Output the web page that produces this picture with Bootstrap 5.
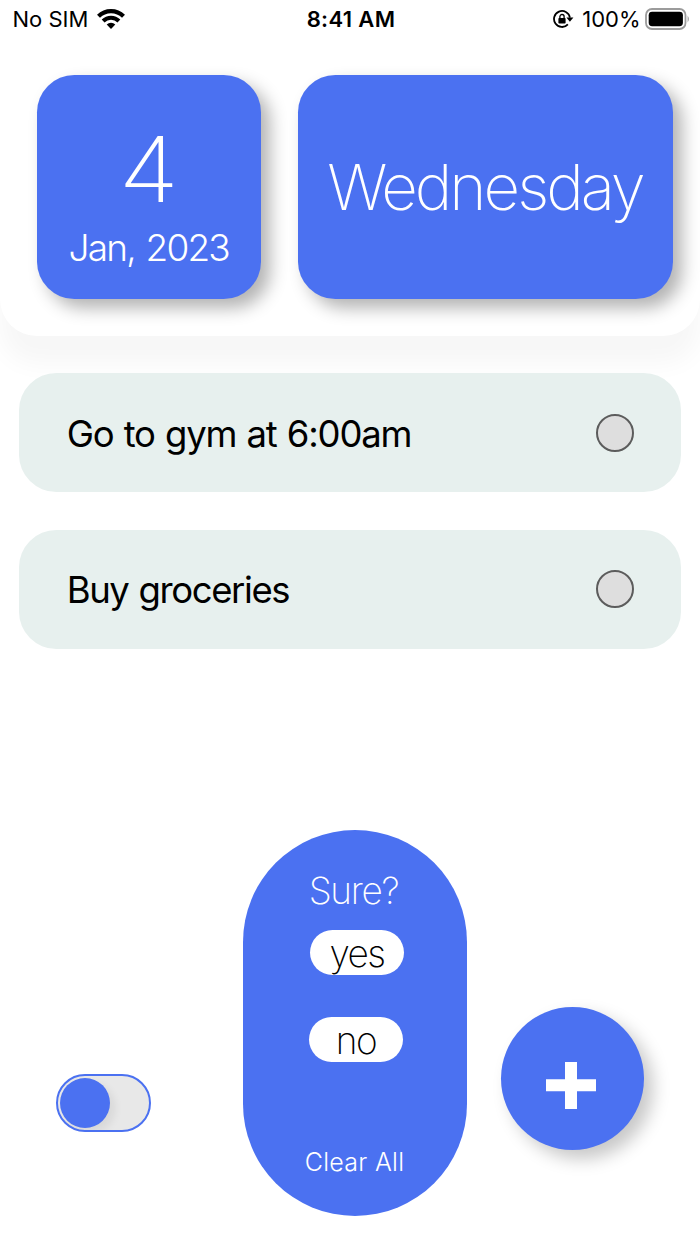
<!DOCTYPE html>
<html lang="en">
<head>
<meta charset="utf-8">
<meta name="viewport" content="width=device-width, initial-scale=1">
<title>Daily tasks</title>
<link href="https://cdn.jsdelivr.net/npm/bootstrap@5.3.0/dist/css/bootstrap.min.css" rel="stylesheet">
<style>
  :root { --blue: #4b71f1; }
  body { font-family: Inter, "Liberation Sans", sans-serif; color: #000; width: 700px; height: 1244px; overflow: hidden; background: #fff; }
  .txt { white-space: nowrap; display: block; }

  .status-bar { height: 37.5px; padding: 0 10.5px 0 12.5px; font-size: 22px; line-height: 38px; }
  .status-side { flex: 1 1 0; }
  .status-time { font-weight: 600; letter-spacing: .35px; }

  .top-panel { height: 335.5px; border-radius: 0 0 37px 37px; box-shadow: 0 28px 24px 0 #f7f7f7; background: #fff; }
  .tiles { padding: 37px 26.5px 0 37.3px; gap: 37.2px; }
  .tile { height: 224px; border-radius: 37.3px; background: var(--blue); box-shadow: 9px 9px 17px rgba(0,0,0,.3); color: #fff; }
  .tile-date { width: 224px; padding-top: 46px; }
  .tile-day { width: 375px; }
  .num { font-size: 91px; font-weight: 200; line-height: 96px; transform: scaleX(1.08); }
  .month { font-size: 37px; font-weight: 300; line-height: 61px; letter-spacing: -1.8px; word-spacing: 2px; margin-left: -1px; }
  .weekday { font-size: 63.5px; font-weight: 200; line-height: 76px; letter-spacing: -3px; margin-left: -2px; }

  .task-list { padding: 37.5px 18.7px 0; gap: 37.5px; }
  .task { height: 119px; border-radius: 37.3px; background: #e7f0ee; padding: 0 47.3px 0 48px; font-size: 36.5px; }
  .task-name { padding-top: 3px; letter-spacing: -1.2px; word-spacing: 1.2px; }
  .task-name-tight { letter-spacing: -1.4px; }
  .tick { width: 38px; height: 38px; border: 2px solid #5c5c5c; background: #dedede; }

  .controls { padding-left: 56px; height: 386px; margin-top: 181px; }
  .switch-track { width: 95px; height: 58px; border: 2px solid #4b71f1; background: #e8e8e8; margin: 0 91.5px 83.5px 0; padding-left: 1.5px; overflow: hidden; }
  .switch-knob { width: 50.5px; height: 50.5px; background: var(--blue); box-shadow: 5px 5px 9px rgba(0,0,0,.07); }
  .confirm { width: 224px; height: 386px; border-radius: 112px; background: var(--blue); color: #fff; padding-top: 36.5px; margin-right: 34.5px; }
  .question { font-size: 37px; font-weight: 200; line-height: 50px; letter-spacing: -1.3px; margin-left: -2px; }
  .choice { width: 93.5px; height: 44.7px; background: #fff; color: #000; border: 0; padding: 2px 0 0; font-size: 37px; font-weight: 200; line-height: 44px; letter-spacing: -1.5px; }
  .clear { font-size: 25px; font-weight: 300; line-height: 34px; letter-spacing: .3px; }
  .add-btn { width: 143px; height: 143px; border: 0; background: var(--blue); box-shadow: 9px 9px 17px rgba(0,0,0,.22); margin-bottom: 65.6px; padding: 14px 3px 0 0; }
</style>
</head>
<body class="d-flex flex-column m-0">
  <header class="top-panel flex-shrink-0">
    <div class="status-bar d-flex align-items-center">
      <div class="status-side d-flex align-items-center">
        <span class="txt">No SIM</span>
        <svg class="ms-2" width="30" height="22" viewBox="0 0 30 22" aria-hidden="true">
          <g fill="none" stroke="#000">
            <path d="M2.5 8.3a17.8 17.8 0 0 1 25 0" stroke-width="4.2"/>
            <path d="M7.1 13a11.3 11.3 0 0 1 15.8 0" stroke-width="4"/>
          </g>
          <path d="M10.7 16.5a6 6 0 0 1 8.6 0L15 21z"/>
        </svg>
      </div>
      <span class="txt status-time">8:41 AM</span>
      <div class="status-side d-flex align-items-center justify-content-end">
        <svg width="21" height="20" viewBox="0 0 21 20" style="margin-right: 8px" aria-hidden="true">
          <path d="M16.9 8.6A8 8 0 1 0 14.9 15.4" fill="none" stroke="#000" stroke-width="1.8"/>
          <path d="M13.4 8.4h7l-3.5 4.4z"/>
          <rect x="5.4" y="8.9" width="7.2" height="5.6" rx=".8"/>
          <path d="M6.9 9.2V7.6a2.1 2.1 0 0 1 4.2 0v1.6" fill="none" stroke="#000" stroke-width="1.3"/>
        </svg>
        <span class="txt">100%</span>
        <svg class="ms-1" width="45" height="22" viewBox="0 0 45 22" aria-hidden="true">
          <rect x="1" y="1" width="39.5" height="20" rx="6" fill="none" stroke="#9b9b9b" stroke-width="1.8"/>
          <rect x="3.7" y="3.8" width="34.2" height="14.4" rx="3.4"/>
          <path d="M42.6 7.5q2.5 3.5 0 7z" fill="#999"/>
        </svg>
      </div>
    </div>
    <div class="tiles d-flex">
      <div class="tile tile-date d-flex flex-column align-items-center">
        <span class="txt num">4</span>
        <span class="txt month">Jan, 2023</span>
      </div>
      <div class="tile tile-day d-flex align-items-center justify-content-center">
        <span class="txt weekday">Wednesday</span>
      </div>
    </div>
  </header>

  <main class="task-list d-flex flex-column">
    <div class="task d-flex align-items-center justify-content-between flex-shrink-0">
      <span class="txt task-name">Go to gym at 6:00am</span>
      <span class="tick rounded-circle"></span>
    </div>
    <div class="task d-flex align-items-center justify-content-between flex-shrink-0">
      <span class="txt task-name task-name-tight">Buy groceries</span>
      <span class="tick rounded-circle"></span>
    </div>
  </main>

  <footer class="controls d-flex align-items-end flex-shrink-0">
    <div class="switch-track rounded-pill d-flex align-items-center flex-shrink-0" role="switch" aria-checked="false">
      <span class="switch-knob rounded-circle"></span>
    </div>
    <div class="confirm d-flex flex-column align-items-center flex-shrink-0">
      <span class="txt question">Sure?</span>
      <button class="choice rounded-pill" style="margin: 14.3px 0 0 5px"><span class="txt">yes</span></button>
      <button class="choice rounded-pill" style="margin: 42px 0 0 3px"><span class="txt">no</span></button>
      <span class="txt clear" style="margin-top: 83px">Clear All</span>
    </div>
    <button class="add-btn rounded-circle flex-shrink-0" aria-label="Add">
      <svg class="d-block mx-auto" width="50" height="47" viewBox="0 0 50 47"><path d="M19 0h12v17.3h19v12H31V47H19V29.3H0v-12h19z" fill="#fff"/></svg>
    </button>
  </footer>
  <script src="https://cdn.jsdelivr.net/npm/bootstrap@5.3.0/dist/js/bootstrap.bundle.min.js"></script>
</body>
</html>
